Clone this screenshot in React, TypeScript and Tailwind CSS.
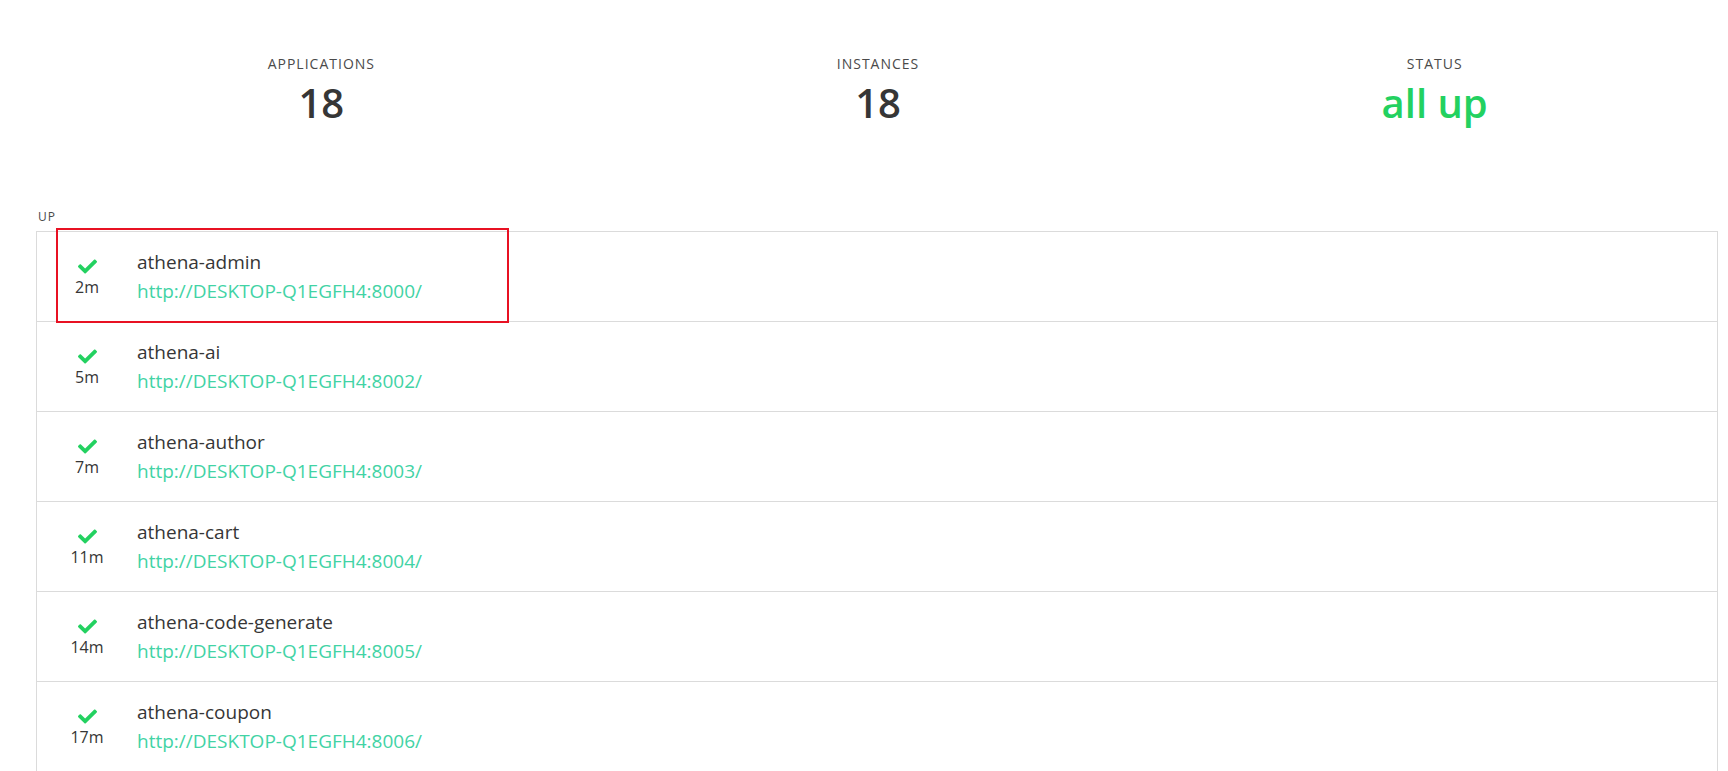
import React from "react";
import { FaCheck } from "react-icons/fa";

const apps = [
  { name: "athena-admin", age: "2m", url: "http://DESKTOP-Q1EGFH4:8000/" },
  { name: "athena-ai", age: "5m", url: "http://DESKTOP-Q1EGFH4:8002/" },
  { name: "athena-author", age: "7m", url: "http://DESKTOP-Q1EGFH4:8003/" },
  { name: "athena-cart", age: "11m", url: "http://DESKTOP-Q1EGFH4:8004/" },
  { name: "athena-code-generate", age: "14m", url: "http://DESKTOP-Q1EGFH4:8005/" },
  { name: "athena-coupon", age: "17m", url: "http://DESKTOP-Q1EGFH4:8006/" },
];

const Stat = ({ label, value, green }: { label: string; value: string; green?: boolean }) => (
  <div className="flex-1 flex flex-col items-center">
    <p className="text-[14px] leading-[20px] tracking-[1px] uppercase text-[#4a4a4a]">{label}</p>
    <p
      className={
        green
          ? "mt-[4px] text-[40px] leading-[50px] font-semibold text-[#23d160]"
          : "mt-[4px] text-[40px] leading-[50px] font-semibold text-[#363636]"
      }
    >
      {value}
    </p>
  </div>
);

export default function App() {
  return (
    <div
      className="w-full h-[771px] overflow-hidden bg-white"
      style={{ fontFamily: '"Open Sans", "Noto Sans", sans-serif' }}
    >
      {/* stats */}
      <div className="flex ml-[43px] mr-[15px] pt-[54px]">
        <Stat label="Applications" value="18" />
        <Stat label="Instances" value="18" />
        <Stat label="Status" value="all up" green />
      </div>

      {/* up list */}
      <div className="ml-[36px] mr-[10px] mt-[81px]">
        <p className="text-[12px] leading-[16px] tracking-[1px] uppercase text-[#4a4a4a] pl-[2px] mb-[6px]">up</p>
        <div className="relative border border-[#dbdbdb]">
          {apps.map((a) => (
            <div key={a.name} className="h-[90px] flex items-start border-b border-[#dbdbdb]">
              <div className="w-[100px] pt-[25px] flex flex-col items-center">
                <FaCheck className="text-[#23d160]" size={19} />
                <span className="text-[16px] leading-[22px] text-[#363636]">{a.age}</span>
              </div>
              <div className="pt-[17px] flex flex-col">
                <span className="text-[19px] leading-[26px] text-[#363636]">{a.name}</span>
                <span className="mt-[3px] text-[19px] leading-[26px] text-[#42d3a5]">{a.url}</span>
              </div>
            </div>
          ))}
          {/* highlight box */}
          <div className="absolute left-[19px] top-[-4px] w-[453px] h-[95px] border-2 border-[#e81123]" />
        </div>
      </div>
    </div>
  );
}
